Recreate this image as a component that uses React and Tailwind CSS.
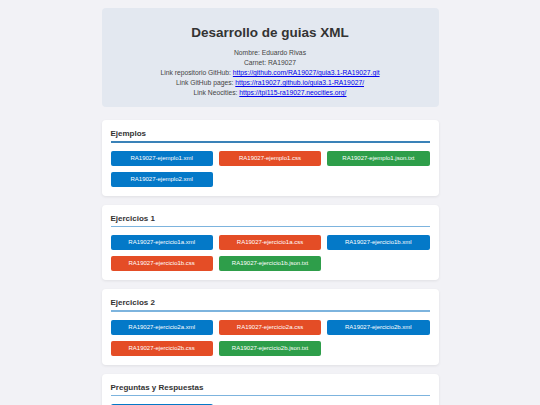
import React from 'react';

const colors = {
  xml: 'bg-[#0479c8]',
  css: 'bg-[#e44d26]',
  json: 'bg-[#2e9e4a]',
};

const sections = [
  {
    title: 'Ejemplos',
    line: 'bg-[#3a82b8]',
    files: [
      ['RA19027-ejemplo1.xml', 'xml'],
      ['RA19027-ejemplo1.css', 'css'],
      ['RA19027-ejemplo1.json.txt', 'json'],
      ['RA19027-ejemplo2.xml', 'xml'],
    ],
  },
  {
    title: 'Ejercicios 1',
    line: 'bg-[#7db4de]',
    files: [
      ['RA19027-ejercicio1a.xml', 'xml'],
      ['RA19027-ejercicio1a.css', 'css'],
      ['RA19027-ejercicio1b.xml', 'xml'],
      ['RA19027-ejercicio1b.css', 'css'],
      ['RA19027-ejercicio1b.json.txt', 'json'],
    ],
  },
  {
    title: 'Ejercicios 2',
    line: 'bg-[#7db4de]',
    files: [
      ['RA19027-ejercicio2a.xml', 'xml'],
      ['RA19027-ejercicio2a.css', 'css'],
      ['RA19027-ejercicio2b.xml', 'xml'],
      ['RA19027-ejercicio2b.css', 'css'],
      ['RA19027-ejercicio2b.json.txt', 'json'],
    ],
  },
  {
    title: 'Preguntas y Respuestas',
    line: 'bg-[#7db4de]',
    files: [
      ['RA19027-preguntas.xml', 'xml'],
    ],
  },
];

const Section = ({ title, line, files }) => (
  <section className="mt-[9px] rounded-[4px] bg-white px-[9px] pt-[9px] pb-[9px] shadow-[0_1px_3px_rgba(0,0,0,0.08)]">
    <h2 className="pb-[2px] text-[8px] leading-[10px] font-bold text-[#333]">{title}</h2>
    <div className={`h-[1.5px] ${line}`} />
    <div className="mt-[8px] grid grid-cols-3 gap-[6px]">
      {files.map(([name, type]) => (
        <a
          key={name}
          href="#"
          className={`${colors[type]} flex h-[15px] items-center justify-center rounded-[2px] text-[6px] text-white`}
        >
          {name}
        </a>
      ))}
    </div>
  </section>
);

const App = () => {
  return (
    <div className="min-h-[405px] bg-[#f2f2f6] font-['Liberation_Sans',Arial,sans-serif]">
      <div className="mx-auto w-[337px] pt-[8px] pb-[10px]">
        <header className="rounded-[4px] bg-[#e3e8f0] pt-[17px] pb-[9px] text-center text-[#333]">
          <h1 className="text-[13.5px] leading-[16px] font-bold">Desarrollo de guias XML</h1>
          <div className="mt-[7px] text-[6.75px] leading-[10px] text-[#444]">
            <p>Nombre: Eduardo Rivas</p>
            <p>Carnet: RA19027</p>
            <p>
              Link repositorio GitHub:{' '}
              <a href="#" className="text-[#0000ee] underline">https://github.com/RA19027/guia3.1-RA19027.git</a>
            </p>
            <p>
              Link GitHub pages:{' '}
              <a href="#" className="text-[#0000ee] underline">https://ra19027.github.io/guia3.1-RA19027/</a>
            </p>
            <p>
              Link Neocities:{' '}
              <a href="#" className="text-[#0000ee] underline">https://tpi115-ra19027.neocities.org/</a>
            </p>
          </div>
        </header>
        <div className="pt-[4px]">
          {sections.map((s) => (
            <Section key={s.title} {...s} />
          ))}
        </div>
      </div>
    </div>
  );
};

export default App;
